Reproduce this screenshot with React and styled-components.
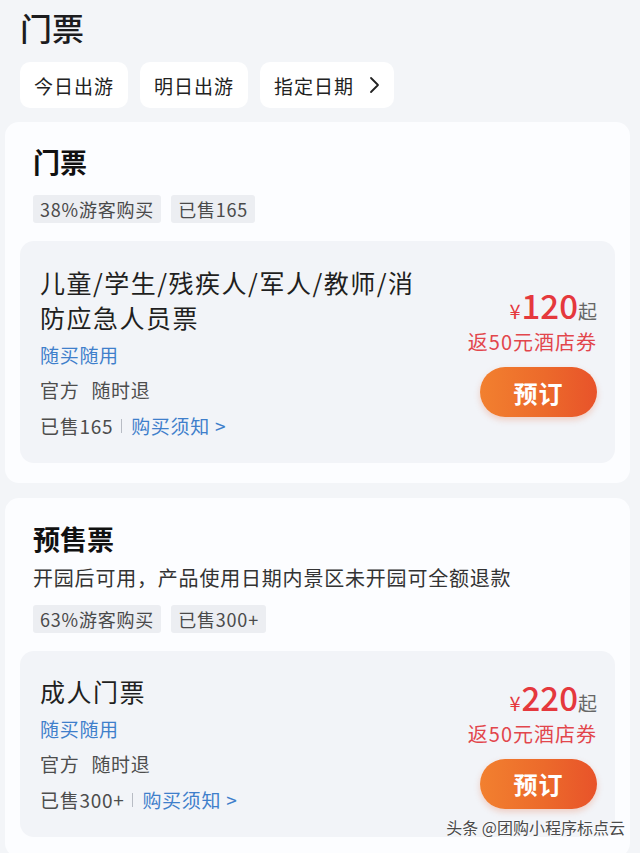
import React from "react";
import styled, { createGlobalStyle } from "styled-components";

const GlobalStyle = createGlobalStyle`
  html, body {
    margin: 0;
    padding: 0;
    background: #f3f5f8;
    font-family: "Noto Sans CJK SC", "Noto Sans", sans-serif;
    color: #1c1c1e;
  }
`;

const Page = styled.div`
  position: relative;
  width: 640px;
  height: 853px;
  overflow: hidden;
  padding: 0 10px 0 5px;
  box-sizing: border-box;
`;

const Header = styled.div`
  padding: 5px 0 14px 15px;
`;

const PageTitle = styled.h1`
  margin: 0;
  font-size: 32px;
  line-height: 44px;
  font-weight: 500;
`;

const ChipRow = styled.div`
  display: flex;
  gap: 12px;
  margin-top: 13px;
`;

const Chip = styled.div`
  display: flex;
  align-items: center;
  gap: 14px;
  height: 46px;
  padding: 0 14px;
  background: #ffffff;
  border-radius: 10px;
  font-size: 19px;
  letter-spacing: 1px;
  color: #222;
`;

const Section = styled.section`
  background: #fcfdff;
  border-radius: 14px;
  padding: ${({ $top }) => $top}px 15px 20px;
  margin-bottom: 15px;
`;

const SectionTitle = styled.h2`
  margin: 0 0 0 13px;
  font-size: 27px;
  line-height: 36px;
  font-weight: 700;
  color: #111;
`;

const Desc = styled.p`
  margin: 7px 0 0 13px;
  font-size: 20px;
  letter-spacing: 0.8px;
  line-height: 28px;
  color: #333;
`;

const TagRow = styled.div`
  display: flex;
  gap: 10px;
  margin: ${({ $mt }) => $mt}px 0 18px 13px;
`;

const Tag = styled.span`
  height: 28px;
  line-height: 28px;
  padding: 0 7px;
  background: #eceef2;
  border-radius: 3px;
  font-size: 18px;
  letter-spacing: 0.8px;
  color: #4a4a4a;
`;

const Ticket = styled.div`
  display: flex;
  align-items: center;
  justify-content: space-between;
  background: #f2f4f8;
  border-radius: 14px;
  padding: ${({ $pt }) => $pt}px 18px 23px 20px;
`;

const Info = styled.div`
  display: flex;
  flex-direction: column;
  width: 385px;
`;

const TicketName = styled.div`
  font-size: 25px;
  letter-spacing: 1.5px;
  line-height: 35px;
  color: #1f1f21;
`;

const Line = styled.div`
  display: flex;
  align-items: center;
  margin-top: ${({ $mt }) => $mt}px;
  font-size: 19px;
  letter-spacing: 0.7px;
  line-height: 28px;
  color: ${({ $blue }) => ($blue ? "#3f7fcb" : "#4d4d4d")};
`;

const Gap = styled.span`
  display: inline-block;
  width: 12px;
`;

const Divider = styled.span`
  display: inline-block;
  width: 1px;
  height: 14px;
  margin: 0 9px 0 8px;
  background: #b8bcc4;
`;

const Link = styled.span`
  color: #3f7fcb;
`;

const Side = styled.div`
  display: flex;
  flex-direction: column;
  align-items: flex-end;
`;

const Price = styled.div`
  display: flex;
  align-items: baseline;
  color: #e5383d;
  line-height: 34px;
`;

const Yen = styled.span`
  font-size: 20px;
  margin-right: 1px;
`;

const Amount = styled.span`
  font-size: 33px;
  font-weight: 500;
`;

const Qi = styled.span`
  font-size: 19px;
  color: #666;
`;

const Coupon = styled.div`
  font-size: 20px;
  letter-spacing: 1px;
  line-height: 28px;
  color: #e2464c;
`;

const BookButton = styled.button`
  margin-top: 11px;
  width: 117px;
  height: 50px;
  border: none;
  border-radius: 25px;
  background: linear-gradient(90deg, #f2802f 0%, #ec6a2b 55%, #e8532a 100%);
  box-shadow: 0 3px 6px rgba(232, 90, 40, 0.25);
  color: #fff;
  font-family: inherit;
  font-size: 24px;
  font-weight: 700;
  letter-spacing: 1px;
`;

const Watermark = styled.div`
  position: absolute;
  right: 15px;
  bottom: 14px;
  font-size: 16px;
  color: #4a4a4a;
  text-shadow: 0 0 2px #fff, 0 0 2px #fff;
`;

const Chevron = () => (
  <svg width="12" height="18" viewBox="0 0 12 18" fill="none">
    <path d="M3 2l7 7-7 7" stroke="#222" strokeWidth="1.8" strokeLinecap="round" strokeLinejoin="round" />
  </svg>
);

const tickets = [
  {
    section: "门票",
    top: 22,
    tags: ["38%游客购买", "已售165"],
    name: "儿童/学生/残疾人/军人/教师/消防应急人员票",
    sold: "已售165",
    price: "120",
    pt: 24,
  },
  {
    section: "预售票",
    top: 23,
    desc: "开园后可用，产品使用日期内景区未开园可全额退款",
    tags: ["63%游客购买", "已售300+"],
    name: "成人门票",
    sold: "已售300+",
    price: "220",
    pt: 23,
  },
];

const App = () => (
  <Page>
    <GlobalStyle />
    <Header>
      <PageTitle>门票</PageTitle>
      <ChipRow>
        <Chip>今日出游</Chip>
        <Chip>明日出游</Chip>
        <Chip>
          指定日期
          <Chevron />
        </Chip>
      </ChipRow>
    </Header>

    {tickets.map((t) => (
      <Section key={t.section} $top={t.top}>
        <SectionTitle>{t.section}</SectionTitle>
        {t.desc && <Desc>{t.desc}</Desc>}
        <TagRow $mt={t.desc ? 13 : 15}>
          {t.tags.map((tag) => (
            <Tag key={tag}>{tag}</Tag>
          ))}
        </TagRow>
        <Ticket $pt={t.pt}>
          <Info>
            <TicketName>{t.name}</TicketName>
            <Line $blue $mt={6}>随买随用</Line>
            <Line $mt={7}>
              官方<Gap />随时退
            </Line>
            <Line $mt={8}>
              {t.sold}
              <Divider />
              <Link>购买须知 &gt;</Link>
            </Line>
          </Info>
          <Side>
            <Price>
              <Yen>¥</Yen>
              <Amount>{t.price}</Amount>
              <Qi>起</Qi>
            </Price>
            <Coupon>返50元酒店券</Coupon>
            <BookButton>预订</BookButton>
          </Side>
        </Ticket>
      </Section>
    ))}

    <Watermark>头条 @团购小程序标点云</Watermark>
  </Page>
);

export default App;
